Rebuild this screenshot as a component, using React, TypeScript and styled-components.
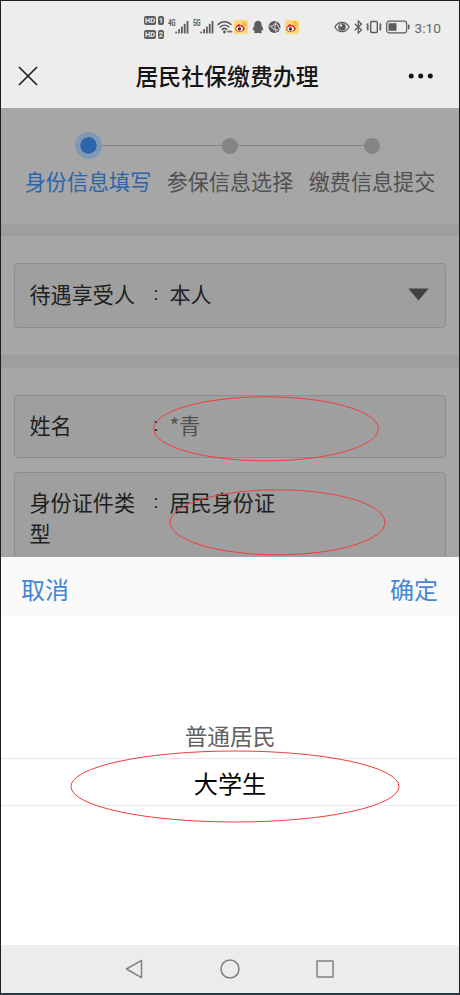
import React from "react";
import styled, { createGlobalStyle } from "styled-components";

const Global = createGlobalStyle`
  * { box-sizing: border-box; }
  body { margin: 0; background: #ededed; }
`;

const Phone = styled.div`
  position: relative;
  display: flex;
  flex-direction: column;
  width: 460px;
  height: 995px;
  overflow: hidden;
  border: 1px solid #1e1e1e;
  border-bottom: 2px solid #213a4a;
  background: #ededed;
  font-family: "Noto Sans CJK SC", sans-serif;
`;

const StatusBar = styled.div`
  display: flex;
  align-items: center;
  flex: none;
  height: 51px;
  padding: 1px 18px 0 143px;
  color: #5c5c5c;
`;

const StatusIcon = styled.svg<{ $gap?: number }>`
  display: block;
  flex: none;
  margin-left: ${(p) => p.$gap ?? 0}px;
`;

const HdStack = styled.div`
  display: flex;
  flex-direction: column;
  gap: 5px;
`;

const HdRow = styled.div`
  display: flex;
  gap: 2px;
`;

const HdTag = styled.span<{ $w: number }>`
  width: ${(p) => p.$w}px;
  height: 9px;
  border-radius: 2px;
  background: #5c5c5c;
  color: #ededed;
  font: 700 7.5px/9px "Roboto", sans-serif;
  text-align: center;
`;

const NetLabel = styled.span<{ $gap: number }>`
  width: 7px;
  margin: -9px 0 0 ${(p) => p.$gap}px;
  font: 700 8.5px/8px "Roboto", sans-serif;
  letter-spacing: -0.5px;
  transform: scaleX(0.75);
  transform-origin: left;
`;

const Spacer = styled.div`
  flex: 1;
`;

const Clock = styled.span`
  margin: 2px 0 0 5px;
  font: 400 13.7px/20px "Roboto", sans-serif;
  color: #666;
`;

const TitleBar = styled.header`
  display: grid;
  grid-template-columns: 57px 1fr 63px;
  align-items: center;
  flex: none;
  height: 56px;
  padding-bottom: 8px;
`;

const Title = styled.h1`
  margin: 0;
  padding-bottom: 2px;
  text-align: center;
  font-size: 22.9px;
  line-height: 34px;
  font-weight: 500;
  color: #161616;
`;

const IconButton = styled.button<{ $end?: boolean }>`
  display: flex;
  justify-content: ${(p) => (p.$end ? "flex-end" : "flex-start")};
  padding: ${(p) => (p.$end ? "0 25px 0 0" : "0 0 0 17px")};
  border: 0;
  background: none;
`;

const Content = styled.main`
  flex: none;
  height: 449px;
  overflow: hidden;
  background: #9e9e9e;
`;

const Section = styled.section<{ $h: number; $gap?: number; $pad: string }>`
  display: flex;
  flex-direction: column;
  gap: 14px;
  height: ${(p) => p.$h}px;
  margin-bottom: ${(p) => p.$gap ?? 0}px;
  padding: ${(p) => p.$pad};
  background: #a6a6a6;
`;

const Steps = styled.ol`
  display: grid;
  grid-template-columns: repeat(3, 142px);
  margin: 0;
  padding: 0;
  list-style: none;
`;

const Step = styled.li<{ $active?: boolean }>`
  display: flex;
  flex-direction: column;
  align-items: center;
  color: ${(p) => (p.$active ? "#2c64a9" : "#505050")};
  font-size: 21.1px;
  line-height: 30px;
  white-space: nowrap;
`;

const Track = styled.div`
  display: flex;
  align-items: center;
  width: 100%;
  height: 28px;
  margin-bottom: 6px;
`;

const Line = styled.i<{ $on: boolean }>`
  flex: 1;
  height: 1px;
  background: ${(p) => (p.$on ? "#858585" : "transparent")};
`;

const Dot = styled.i<{ $active?: boolean }>`
  width: ${(p) => (p.$active ? 27 : 16)}px;
  height: ${(p) => (p.$active ? 27 : 16)}px;
  border-radius: 50%;
  border: ${(p) => (p.$active ? "5.5px solid #7f98b6" : "0")};
  background: ${(p) => (p.$active ? "#2b65ab" : "#858585")};
  background-clip: padding-box;
`;

const Field = styled.div<{ $h: number; $top: number }>`
  display: grid;
  grid-template-columns: 124px 16px 1fr auto;
  align-items: start;
  flex: none;
  height: ${(p) => p.$h}px;
  padding: ${(p) => p.$top}px 16px 0 14.5px;
  border: 1px solid #8c8c8c;
  border-radius: 4px;
  background: #9f9f9f;
  color: #202020;
  font-size: 21.1px;
  line-height: 30.5px;
`;

const FieldLabel = styled.span`
  width: 108px;
`;

const Colon = styled.span`
  font-family: "Roboto", sans-serif;
  font-size: 19px;
`;

const FieldValue = styled.span<{ $muted?: boolean }>`
  color: ${(p) => (p.$muted ? "#505050" : "#202020")};
`;

const Arrow = styled.svg`
  display: block;
  margin-top: 9px;
`;

const SheetBar = styled.div`
  display: flex;
  justify-content: space-between;
  align-items: center;
  flex: none;
  height: 59px;
  padding: 4px 21px 0 20px;
  background: #fafafa;
`;

const SheetAction = styled.button`
  padding: 0;
  border: 0;
  background: none;
  color: #4187d6;
  font: 400 24px/36px "Noto Sans CJK SC", sans-serif;
`;

const Picker = styled.div`
  flex: none;
  height: 329px;
  padding-top: 95px;
  background: #fff;
`;

const Option = styled.div<{ $selected?: boolean }>`
  height: ${(p) => (p.$selected ? 48 : 47)}px;
  border: solid #e9e9e9;
  border-width: ${(p) => (p.$selected ? "1px 0" : "0")};
  padding-top: ${(p) => (p.$selected ? 0 : 1)}px;
  text-align: center;
  font-size: ${(p) => (p.$selected ? 24.2 : 22.7)}px;
  line-height: 47px;
  color: ${(p) => (p.$selected ? "#050505" : "#606060")};
`;

const NavBar = styled.nav`
  display: flex;
  justify-content: center;
  align-items: center;
  gap: 75px;
  flex: 1;
  background: #ececec;
`;

const Marks = styled.svg`
  position: absolute;
  left: -1px;
  top: -1px;
  pointer-events: none;
`;

const Signal = () => (
  <StatusIcon width="14" height="14" viewBox="0 0 14 14" fill="#5c5c5c">
    <circle cx="1.2" cy="12.4" r="1" />
    <rect x="3.2" y="9" width="1.8" height="4.5" rx=".6" />
    <rect x="6" y="6.5" width="1.8" height="7" rx=".6" />
    <rect x="8.8" y="3.8" width="1.8" height="9.7" rx=".6" />
    <rect x="11.6" y="1" width="1.8" height="12.5" rx=".6" />
  </StatusIcon>
);

const Weibo = ({ gap }: { gap: number }) => (
  <StatusIcon $gap={gap} width="14" height="14" viewBox="0 0 14 14">
    <rect width="14" height="14" rx="2" fill="#fbd878" />
    <path d="M8.2 2.2c2.6-.5 4.3 1.3 3.9 3.8M8.6 4c1.2-.1 2 .6 1.8 1.9" fill="none" stroke="#f39a32" strokeWidth="1" />
    <path d="M1.3 8.5C1.6 6 4.9 3.5 6 4.4c.4.3.2.8.1 1.1 1.7-.6 3.3-.5 3.1 1 2.5 1 1.7 3.5-.4 4.6-3.3 1.7-7.8.3-7.5-2.6z" fill="#d52b2b" />
    <ellipse cx="5.6" cy="8.8" rx="3.3" ry="2.2" fill="#fff" />
    <circle cx="5.4" cy="8.8" r="1.6" fill="#111" />
    <circle cx="5" cy="8.5" r=".45" fill="#fff" />
  </StatusIcon>
);

const steps = ["身份信息填写", "参保信息选择", "缴费信息提交"];

export default function App() {
  return (
    <>
      <Global />
      <Phone>
        <StatusBar>
          <HdStack>
            {["1", "2"].map((n) => (
              <HdRow key={n}>
                <HdTag $w={12}>HD</HdTag>
                <HdTag $w={6}>{n}</HdTag>
              </HdRow>
            ))}
          </HdStack>
          <NetLabel $gap={4}>4G</NetLabel>
          <Signal />
          <NetLabel $gap={4}>5G</NetLabel>
          <Signal />
          <StatusIcon $gap={3} width="16" height="14" viewBox="0 0 16 14" fill="none" stroke="#5c5c5c" strokeWidth="1.5" strokeLinecap="round">
            <path d="M1 4.5C4.5.7 10.5.7 14 4.5M3.2 7c2.5-2.4 6.1-2.4 8.6 0M5.3 9.4c1.3-1.2 3.1-1.2 4.4 0" />
            <circle cx="7.5" cy="12" r=".7" fill="#5c5c5c" />
            <path d="M10.7 11.6h4M11.7 10.6l-1 1 1 1M13.7 10.6l1 1-1 1" strokeWidth=".9" />
          </StatusIcon>
          <Weibo gap={1} />
          <StatusIcon $gap={4} width="12" height="14" viewBox="0 0 12 14" fill="#5c5c5c">
            <path d="M6 .8c2.4 0 3.7 1.7 3.7 4.1v1.2c.8 1.2 1.7 2.7 1.5 4.1-.3.7-.9.2-1.3-.5-.1.7-.4 1.2-.8 1.7.6.3.9.7.8 1.2-.3.8-3 .6-3.900.2-.9.4-3.600.6-3.900-.2-.1-.5.2-.9.8-1.200-.4-.5-.7-1-.8-1.700-.4.7-1 1.200-1.300.5-.2-1.400.7-2.900 1.500-4.100V4.900C2.300 2.500 3.600.8 6 .8z" />
          </StatusIcon>
          <StatusIcon $gap={4} width="13" height="14" viewBox="0 0 13 14" fill="none">
            <circle cx="6.5" cy="7" r="6" fill="#5c5c5c" />
            <path d="M1.4 6.2C4 6.5 7 5 8.5 1.5M8 3.5c-1.8 3-1.5 6 .5 9M3.3 6.5c1 2.5 4 4 7.5 3.4M8.5 3.5l3.3 5.5" stroke="#ededed" strokeWidth=".9" />
          </StatusIcon>
          <Weibo gap={4} />
          <Spacer />
          <StatusIcon width="16" height="12" viewBox="0 0 16 12">
            <path d="M.9 6C4.3-.2 11.7-.2 15.1 6 11.7 12.2 4.3 12.2.9 6z" fill="none" stroke="#5c5c5c" strokeWidth="1.3" />
            <circle cx="8" cy="6" r="3.8" fill="#5c5c5c" />
            <circle cx="6.8" cy="4.4" r="1.2" fill="#ededed" />
          </StatusIcon>
          <StatusIcon $gap={4} width="9" height="14" viewBox="0 0 9 14" fill="none" stroke="#5c5c5c" strokeWidth="1.3">
            <path d="M.8 3.8l6.7 6.3-3.2 2.9V1l3.200 2.900L.8 10.200" />
          </StatusIcon>
          <StatusIcon $gap={3} width="16" height="14" viewBox="0 0 16 14" fill="none" stroke="#5c5c5c" strokeWidth="1.4">
            <rect x="4.7" y="1.5" width="6.6" height="11" rx="1" />
            <path d="M2.2 3.5l-1 1.3 1 1.4-1 1.4 1 1.4-1 1.3M13.8 3.5l1 1.3-1 1.4 1 1.4-1 1.4 1 1.3" />
          </StatusIcon>
          <StatusIcon $gap={4} width="24" height="14" viewBox="0 0 24 14">
            <rect x=".7" y="1.2" width="20" height="11.6" rx="2.5" fill="none" stroke="#5c5c5c" strokeWidth="1.2" />
            <rect x="2.5" y="3.2" width="8" height="7.6" fill="#5c5c5c" />
            <rect x="22" y="4.5" width="1.5" height="5" rx=".7" fill="#5c5c5c" />
          </StatusIcon>
          <Clock>3:10</Clock>
        </StatusBar>

        <TitleBar>
          <IconButton aria-label="关闭">
            <svg width="20" height="20" viewBox="0 0 20 20" stroke="#222" strokeWidth="1.7" fill="none">
              <path d="M1 1l18 18M19 1L1 19" />
            </svg>
          </IconButton>
          <Title>居民社保缴费办理</Title>
          <IconButton $end aria-label="更多">
            <svg width="26" height="6" viewBox="0 0 26 6" fill="#161616">
              <circle cx="3.2" cy="3" r="2.5" />
              <circle cx="12.7" cy="3" r="2.5" />
              <circle cx="22.3" cy="3" r="2.5" />
            </svg>
          </IconButton>
        </TitleBar>

        <Content>
          <Section $h={116} $gap={12} $pad="23.5px 0 0 16px">
            <Steps>
              {steps.map((s, i) => (
                <Step key={s} $active={i === 0}>
                  <Track>
                    <Line $on={i > 0} />
                    <Dot $active={i === 0} />
                    <Line $on={i < 2} />
                  </Track>
                  {s}
                </Step>
              ))}
            </Steps>
          </Section>
          <Section $h={119} $gap={13} $pad="27px 13px 0">
            <Field $h={65} $top={15}>
              <FieldLabel>待遇享受人</FieldLabel>
              <Colon>:</Colon>
              <FieldValue>本人</FieldValue>
              <Arrow width="21" height="13" viewBox="0 0 21 13" fill="#424242">
                <path d="M.3.5h20.4L10.5 12.500z" />
              </Arrow>
            </Field>
          </Section>
          <Section $h={189} $pad="27px 13px 0">
            <Field $h={63} $top={14}>
              <FieldLabel>姓名</FieldLabel>
              <Colon>:</Colon>
              <FieldValue $muted>*青</FieldValue>
            </Field>
            <Field $h={110} $top={14}>
              <FieldLabel>身份证件类型</FieldLabel>
              <Colon>:</Colon>
              <FieldValue>居民身份证</FieldValue>
            </Field>
          </Section>
        </Content>

        <SheetBar>
          <SheetAction>取消</SheetAction>
          <SheetAction>确定</SheetAction>
        </SheetBar>
        <Picker>
          <Option>普通居民</Option>
          <Option $selected>大学生</Option>
        </Picker>

        <NavBar>
          <svg width="20" height="20" viewBox="0 0 20 20" fill="none" stroke="#808080" strokeWidth="1.5" strokeLinejoin="round">
            <path d="M16.5 1.3v17.4L1.500 10z" />
          </svg>
          <svg width="20" height="20" viewBox="0 0 20 20" fill="none" stroke="#808080" strokeWidth="1.5">
            <circle cx="10" cy="10" r="9" />
          </svg>
          <svg width="20" height="20" viewBox="0 0 20 20" fill="none" stroke="#808080" strokeWidth="1.5">
            <rect x="2" y="2" width="16" height="16" rx=".5" />
          </svg>
        </NavBar>

        <Marks width="460" height="995" viewBox="0 0 460 995" fill="none" stroke="#f23c3c" strokeWidth="1">
          <ellipse cx="266" cy="428.8" rx="112.3" ry="32" />
          <ellipse cx="277.5" cy="522.3" rx="107.5" ry="32.5" />
          <ellipse cx="235" cy="786.5" rx="164" ry="35.5" />
        </Marks>
      </Phone>
    </>
  );
}
